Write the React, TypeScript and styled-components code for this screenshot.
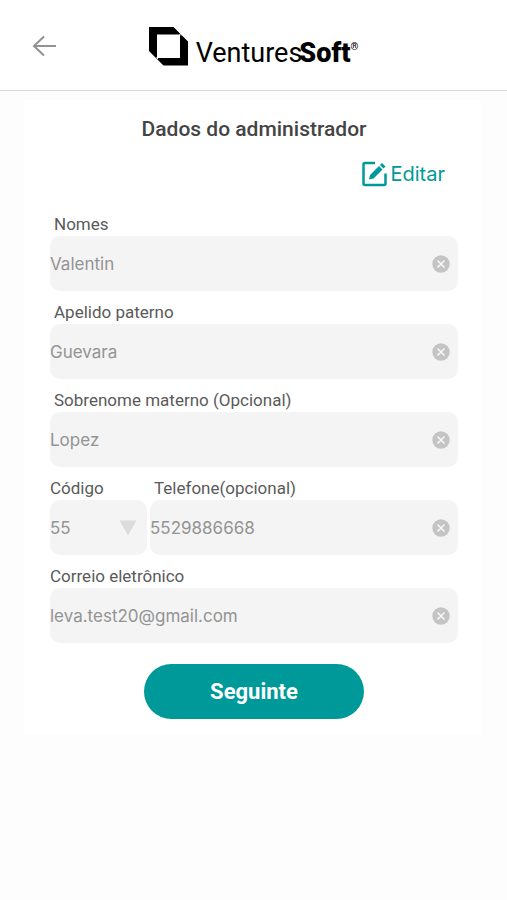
import React, { useState } from "react";
import styled, { createGlobalStyle } from "styled-components";

const GlobalStyle = createGlobalStyle`
  *, *::before, *::after { box-sizing: border-box; }
  body {
    margin: 0;
    background: #fdfdfd;
    color: #4a4a4a;
    font-family: Roboto, "Liberation Sans", sans-serif;
  }
  button, input, select { font: inherit; }
`;

const Header = styled.header`
  display: grid;
  grid-template-columns: 1fr auto 1fr;
  align-items: center;
  padding: 2px 30px 0;
  height: 91px;
  background: #fff;
  border-bottom: 1px solid #dcdcdc;
`;

const BackButton = styled.button`
  justify-self: start;
  display: flex;
  padding: 0;
  border: 0;
  background: none;
  color: #929292;
  cursor: pointer;
`;

const Brand = styled.div`
  display: flex;
  align-items: center;
  gap: 8px;
  color: #000;
`;

const BrandName = styled.div`
  display: flex;
  align-items: flex-start;
  padding-top: 14px;
  font-size: 27px;
  line-height: 32px;
`;

const BrandLight = styled.span`
  font-weight: 400;
`;

const BrandBold = styled.span`
  margin-left: -3px;
  font-weight: 900;
`;

const Registered = styled.sup`
  font-size: 10px;
  line-height: 20px;
  font-weight: 700;
`;

const Card = styled.main`
  margin: 9px 26px 0 24px;
  padding: 16px 23px 16px 26px;
  background: #fff;
`;

const Title = styled.h1`
  margin: 0;
  font-size: 21px;
  line-height: 26px;
  font-weight: 500;
  text-align: center;
  color: #444;
`;

const EditRow = styled.div`
  display: flex;
  justify-content: flex-end;
  padding: 18px 13px 0 0;
`;

const EditButton = styled.button`
  display: flex;
  align-items: center;
  gap: 3px;
  padding: 0;
  border: 0;
  background: none;
  color: #009999;
  font-family: Inter, sans-serif;
  font-size: 20px;
  line-height: 28px;
  cursor: pointer;
`;

const Form = styled.form`
  display: flex;
  flex-direction: column;
  gap: 9px;
  padding-top: 24px;
`;

const FieldRow = styled.div`
  display: grid;
  grid-template-columns: 97px 1fr;
  gap: 3px;
`;

const FieldGroup = styled.div`
  display: flex;
  flex-direction: column;
  min-width: 0;
`;

const Label = styled.label<{ $indent?: boolean }>`
  padding-left: ${(p) => (p.$indent ? "4px" : "0")};
  font-size: 17px;
  line-height: 24px;
  white-space: nowrap;
  color: #5a5a5a;
`;

const Control = styled.div`
  display: flex;
  align-items: center;
  height: 55px;
  padding-right: 8px;
  border-radius: 10px;
  background: #f4f4f4;
`;

const TextInput = styled.input`
  flex: 1;
  min-width: 0;
  height: 100%;
  padding: 0;
  border: 0;
  background: none;
  outline-offset: -2px;
  color: #939393;
  font-family: Inter, sans-serif;
  font-size: 17px;
`;

const CodeSelect = styled.select`
  flex: 1;
  min-width: 0;
  height: 100%;
  padding: 0;
  border: 0;
  appearance: none;
  background: none;
  color: #939393;
  font-family: Inter, sans-serif;
  font-size: 17px;
`;

const ClearButton = styled.button`
  display: flex;
  padding: 0;
  border: 0;
  background: none;
  cursor: pointer;
`;

const SubmitButton = styled.button`
  align-self: center;
  width: 220px;
  height: 55px;
  margin-top: 12px;
  border: 0;
  border-radius: 28px;
  background: #009999;
  color: #fff;
  font-size: 22px;
  font-weight: 700;
  cursor: pointer;
`;

const BackIcon = () => (
  <svg width="28" height="24" viewBox="0 0 28 24" fill="none" stroke="currentColor" strokeWidth="2" aria-hidden="true">
    <path d="M26 12H4M14 2.5L4 12l10 9.5" />
  </svg>
);

const LogoMark = () => (
  <svg width="39" height="39" viewBox="0 0 39 39" aria-hidden="true">
    <path fillRule="evenodd" d="M0 0H24.500L39 14.500V38.500H14.500L0 24ZM8 7.500V31H31V7.500Z" fill="#000" />
    <path d="M30.500 7L32 8.500M7.500 30.500L9 32" stroke="#fff" strokeWidth="1" />
  </svg>
);

const EditIcon = () => (
  <svg width="25" height="26" viewBox="0 0 25 26" fill="none" aria-hidden="true">
    <path d="M13 2H3Q1.500 2 1.500 3.500V22.500Q1.500 24 3 24H22Q23.500 24 23.500 22.500V12.500" stroke="currentColor" strokeWidth="2.500" />
    <path d="M7 18.500L8 14L17 5L20.500 8.500L11.500 17.500ZM18 4L20 2L23.500 5.500L21.500 7.500Z" fill="currentColor" />
  </svg>
);

const ClearIcon = () => (
  <svg width="18" height="18" viewBox="0 0 18 18" aria-hidden="true">
    <circle cx="9" cy="9" r="8.700" fill="#c4c4c4" />
    <path d="M5.500 5.500l7 7M12.500 5.500l-7 7" stroke="#f6f6f6" strokeWidth="1.700" />
  </svg>
);

const TriangleIcon = () => (
  <svg width="22" height="16" viewBox="0 0 22 16" aria-hidden="true">
    <path d="M2.500 0.500H19.500L11 15.500Z" fill="#dcdcdc" />
  </svg>
);

type FieldProps = {
  id: string;
  label: string;
  initial: string;
  type?: string;
  indent?: boolean;
};

function Field({ id, label, initial, type = "text", indent }: FieldProps) {
  const [value, setValue] = useState(initial);
  return (
    <FieldGroup>
      <Label htmlFor={id} $indent={indent}>{label}</Label>
      <Control>
        <TextInput id={id} type={type} value={value} onChange={(e) => setValue(e.target.value)} />
        <ClearButton type="button" aria-label={`Limpar ${label}`} onClick={() => setValue("")}>
          <ClearIcon />
        </ClearButton>
      </Control>
    </FieldGroup>
  );
}

export default function App() {
  return (
    <>
      <GlobalStyle />
      <Header>
        <BackButton type="button" aria-label="Voltar"><BackIcon /></BackButton>
        <Brand>
          <LogoMark />
          <BrandName>
            <BrandLight>Ventures</BrandLight>
            <BrandBold>Soft</BrandBold>
            <Registered>®</Registered>
          </BrandName>
        </Brand>
      </Header>
      <Card>
        <Title>Dados do administrador</Title>
        <EditRow>
          <EditButton type="button"><EditIcon />Editar</EditButton>
        </EditRow>
        <Form onSubmit={(e) => e.preventDefault()}>
          <Field id="nomes" label="Nomes" initial="Valentin" indent />
          <Field id="paterno" label="Apelido paterno" initial="Guevara" indent />
          <Field id="materno" label="Sobrenome materno (Opcional)" initial="Lopez" indent />
          <FieldRow>
            <FieldGroup>
              <Label htmlFor="codigo">Código</Label>
              <Control>
                <CodeSelect id="codigo" defaultValue="55">
                  <option value="55">55</option>
                </CodeSelect>
                <TriangleIcon />
              </Control>
            </FieldGroup>
            <Field id="telefone" label="Telefone(opcional)" initial="5529886668" type="tel" indent />
          </FieldRow>
          <Field id="correio" label="Correio eletrônico" initial="leva.test20@gmail.com" type="email" />
          <SubmitButton type="submit">Seguinte</SubmitButton>
        </Form>
      </Card>
    </>
  );
}
